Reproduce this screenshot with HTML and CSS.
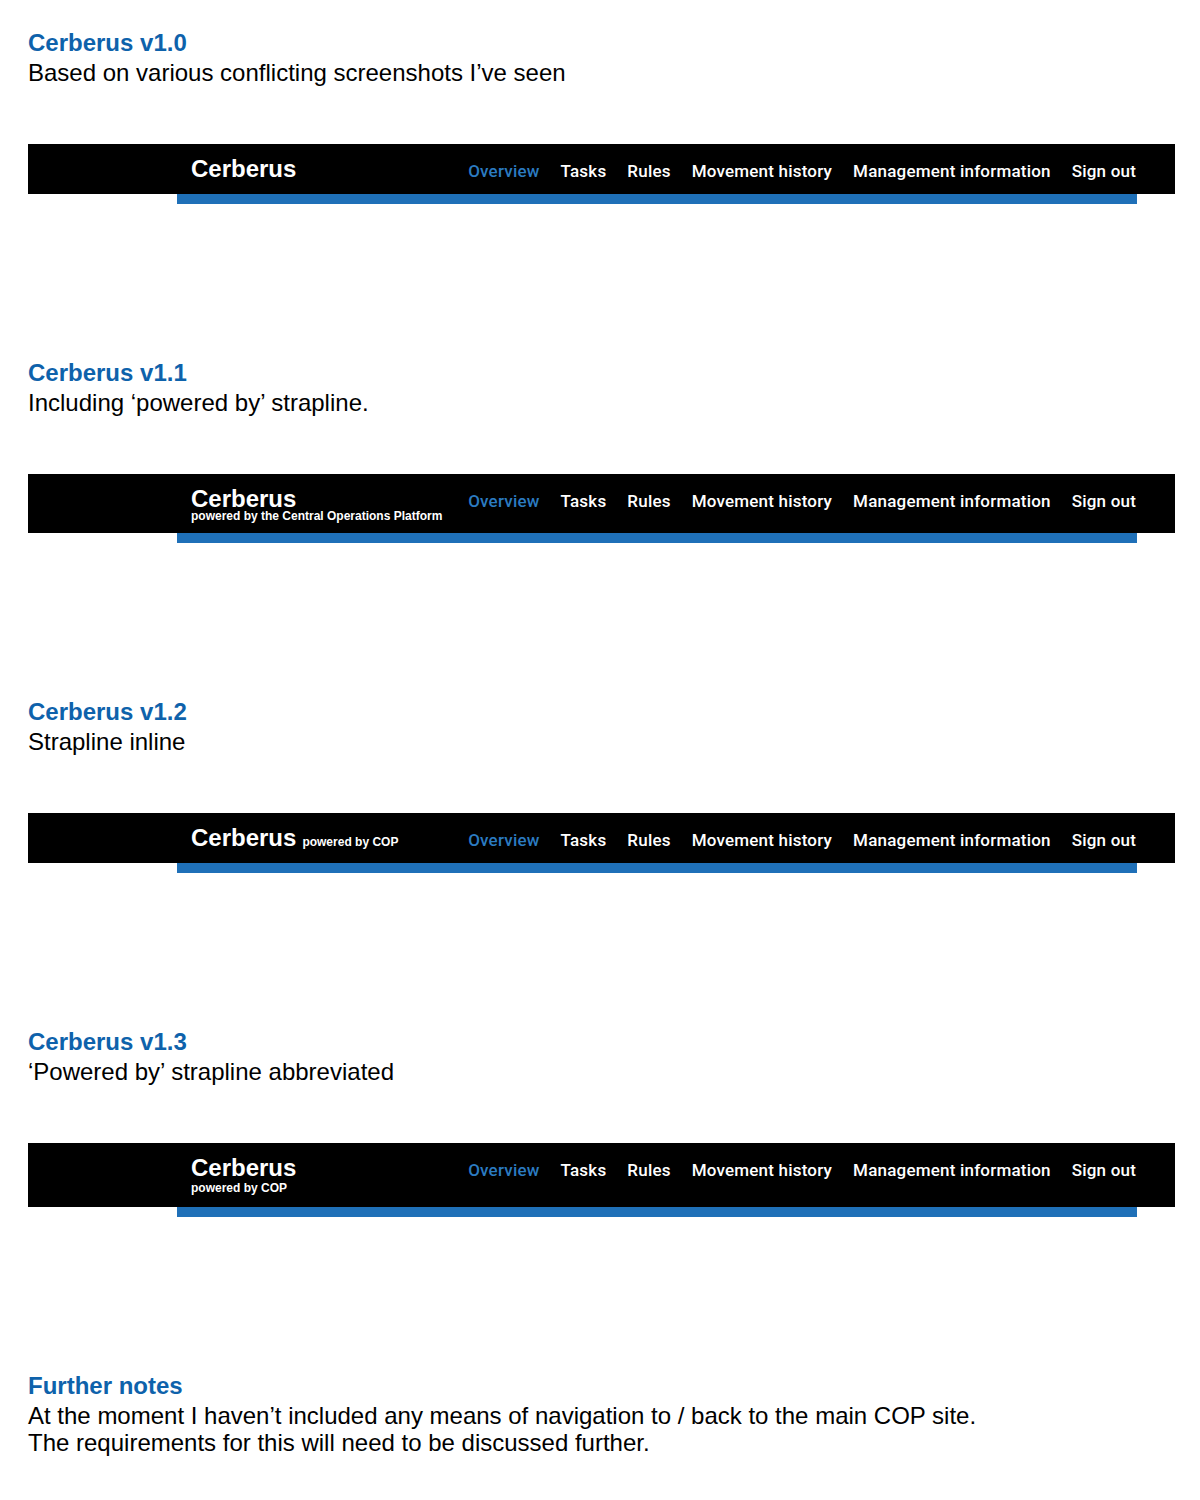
FILE: index.html
```html
<!DOCTYPE html>
<html lang="en">
<head>
<meta charset="utf-8">
<title>Cerberus header options</title>
<link rel="stylesheet" href="styles.css">
</head>
<body>
<main class="page">
  <section class="option">
    <h2 class="option-title">Cerberus v1.0</h2>
    <p class="option-desc">Based on various conflicting screenshots I’ve seen</p>
    <div class="header">
      <div class="header-bar">
        <div class="header-inner">
          <div class="brand"><span class="brand-name">Cerberus</span></div>
          <nav class="nav">
            <a class="nav-link active">Overview</a>
            <a class="nav-link">Tasks</a>
            <a class="nav-link">Rules</a>
            <a class="nav-link">Movement history</a>
            <a class="nav-link">Management information</a>
            <a class="nav-link">Sign out</a>
          </nav>
        </div>
      </div>
      <div class="header-stripe"></div>
    </div>
  </section>

  <section class="option">
    <h2 class="option-title">Cerberus v1.1</h2>
    <p class="option-desc">Including ‘powered by’ strapline.</p>
    <div class="header">
      <div class="header-bar">
        <div class="header-inner">
          <div class="brand brand-stacked">
            <span class="brand-name">Cerberus</span>
            <span class="strap strap-tight">powered by the Central Operations Platform</span>
          </div>
          <nav class="nav">
            <a class="nav-link active">Overview</a>
            <a class="nav-link">Tasks</a>
            <a class="nav-link">Rules</a>
            <a class="nav-link">Movement history</a>
            <a class="nav-link">Management information</a>
            <a class="nav-link">Sign out</a>
          </nav>
        </div>
      </div>
      <div class="header-stripe"></div>
    </div>
  </section>

  <section class="option">
    <h2 class="option-title">Cerberus v1.2</h2>
    <p class="option-desc">Strapline inline</p>
    <div class="header">
      <div class="header-bar">
        <div class="header-inner">
          <div class="brand"><span class="brand-name">Cerberus</span> <span class="strap strap-inline">powered by COP</span></div>
          <nav class="nav">
            <a class="nav-link active">Overview</a>
            <a class="nav-link">Tasks</a>
            <a class="nav-link">Rules</a>
            <a class="nav-link">Movement history</a>
            <a class="nav-link">Management information</a>
            <a class="nav-link">Sign out</a>
          </nav>
        </div>
      </div>
      <div class="header-stripe"></div>
    </div>
  </section>

  <section class="option">
    <h2 class="option-title">Cerberus v1.3</h2>
    <p class="option-desc">‘Powered by’ strapline abbreviated</p>
    <div class="header">
      <div class="header-bar">
        <div class="header-inner">
          <div class="brand brand-stacked">
            <span class="brand-name">Cerberus</span>
            <span class="strap strap-loose">powered by COP</span>
          </div>
          <nav class="nav">
            <a class="nav-link active">Overview</a>
            <a class="nav-link">Tasks</a>
            <a class="nav-link">Rules</a>
            <a class="nav-link">Movement history</a>
            <a class="nav-link">Management information</a>
            <a class="nav-link">Sign out</a>
          </nav>
        </div>
      </div>
      <div class="header-stripe"></div>
    </div>
  </section>

  <section class="notes">
    <h2 class="option-title">Further notes</h2>
    <p class="notes-text">At the moment I haven’t included any means of navigation to / back to the main COP site.<br>The requirements for this will need to be discussed further.</p>
  </section>
</main>
</body>
</html>
```

FILE: styles.css
```css
* {
  box-sizing: border-box;
}

body {
  margin: 0;
  background: #ffffff;
  color: #000000;
  font-family: "Liberation Sans", Arial, sans-serif;
}

.page {
  padding: 28px 0 0 28px;
}

.option {
  margin-bottom: 154px;
}

.option-title {
  margin: 0;
  font-size: 24px;
  line-height: 30px;
  font-weight: 700;
  color: #0e62ab;
}

.option-desc {
  margin: 0;
  font-size: 24px;
  line-height: 30px;
}

.header {
  margin-top: 56px;
  width: 1147px;
}

.header-bar {
  background: #000000;
  padding: 13px 0;
}

.header-inner {
  margin-left: 149px;
  width: 960px;
  padding: 0 1px 0 14px;
  display: flex;
  align-items: baseline;
}

.brand {
  display: flex;
  align-items: baseline;
  color: #ffffff;
}

.brand-stacked {
  flex-direction: column;
  align-items: flex-start;
}

.brand-name {
  font-family: "Liberation Sans", Arial, sans-serif;
  font-weight: 700;
  font-size: 24px;
  line-height: 24px;
}

.strap {
  font-family: "Liberation Sans", Arial, sans-serif;
  font-weight: 700;
  font-size: 12px;
  line-height: 12px;
}

.strap-inline {
  margin-left: 6px;
}

.strap-tight {
  margin-top: 0;
  margin-bottom: -2px;
  line-height: 11px;
}

.strap-loose {
  margin-top: 2px;
}

.nav {
  margin-left: auto;
  display: flex;
  align-items: baseline;
  gap: 21px;
}

.nav-link {
  font-family: Roboto, "Noto Sans", sans-serif;
  font-weight: 500;
  font-size: 17px;
  line-height: 17px;
  color: #ffffff;
  letter-spacing: 0.2px;
}

.nav-link.active {
  color: #2b7bc1;
}

.header-stripe {
  margin-left: 149px;
  width: 960px;
  height: 10px;
  background: #1f70b8;
}

.notes-text {
  margin: 1px 0 0;
  font-size: 24px;
  line-height: 27px;
}
```
